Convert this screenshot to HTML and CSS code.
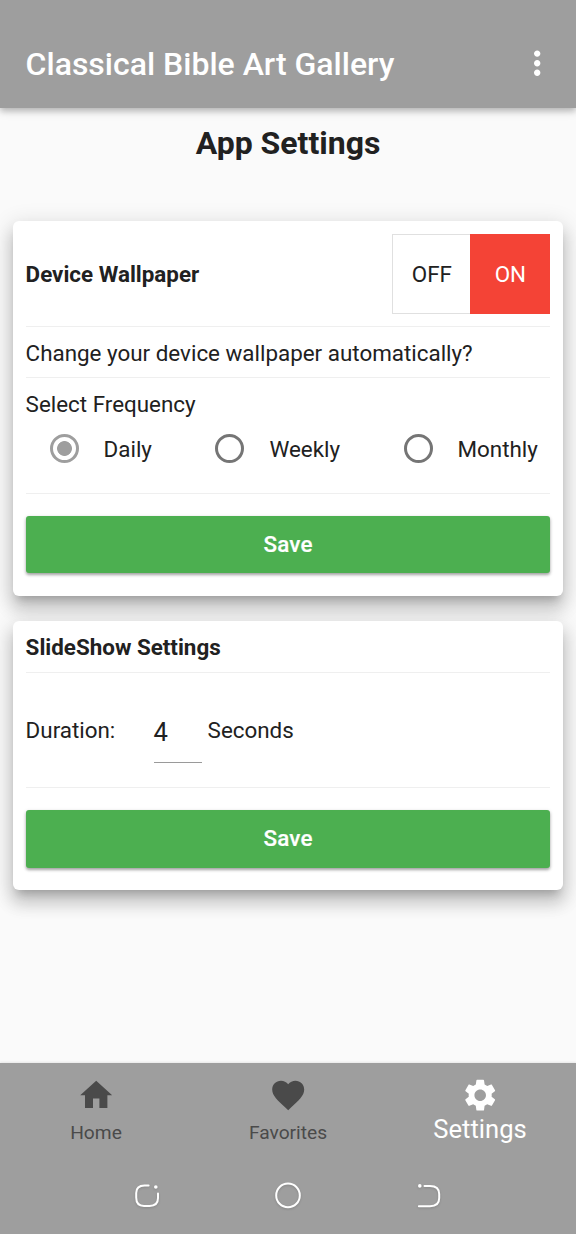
FILE: index.html
```html
<!DOCTYPE html>
<html lang="en">
<head>
<meta charset="utf-8">
<title>Classical Bible Art Gallery</title>
<link rel="stylesheet" href="styles.css">
</head>
<body>
<header class="app-bar">
  <h1 class="app-title">Classical Bible Art Gallery</h1>
  <svg class="more" viewBox="0 0 24 24"><path d="M12 8c1.1 0 2-.9 2-2s-.9-2-2-2-2 .9-2 2 .9 2 2 2zm0 2c-1.1 0-2 .9-2 2s.9 2 2 2 2-.9 2-2-.9-2-2-2zm0 6c-1.1 0-2 .9-2 2s.9 2 2 2 2-.9 2-2-.9-2-2-2z"/></svg>
</header>
<main class="content">
  <h2 class="page-title">App Settings</h2>
  <section class="card wallpaper">
    <div class="row toggle-row">
      <h3 class="card-title">Device Wallpaper</h3>
      <div class="toggle"><span class="option off">OFF</span><span class="option on">ON</span></div>
    </div>
    <p class="row question">Change your device wallpaper automatically?</p>
    <div class="row frequency">
      <p class="frequency-label">Select Frequency</p>
      <div class="radios">
        <span class="choice"><i class="radio checked"></i>Daily</span>
        <span class="choice"><i class="radio"></i>Weekly</span>
        <span class="choice"><i class="radio"></i>Monthly</span>
      </div>
    </div>
    <button class="save">Save</button>
  </section>
  <section class="card slideshow">
    <div class="row slideshow-head"><h3 class="card-title">SlideShow Settings</h3></div>
    <div class="row duration">
      <span class="duration-label">Duration:</span>
      <span class="field">4</span>
      <span class="unit">Seconds</span>
    </div>
    <button class="save">Save</button>
  </section>
</main>
<footer class="bottom">
  <nav class="tabs">
    <a class="tab"><svg class="icon" viewBox="0 0 24 24"><path d="M10 20v-6h4v6h5v-8h3L12 3 2 12h3v8z"/></svg><span class="tab-label">Home</span></a>
    <a class="tab"><svg class="icon" viewBox="0 0 24 24"><path d="M12 21.35l-1.45-1.32C5.4 15.36 2 12.28 2 8.5 2 5.42 4.42 3 7.5 3c1.74 0 3.41.81 4.5 2.09C13.09 3.81 14.76 3 16.5 3 19.58 3 22 5.42 22 8.5c0 3.78-3.4 6.86-8.55 11.54L12 21.35z"/></svg><span class="tab-label">Favorites</span></a>
    <a class="tab active"><svg class="icon" viewBox="0 0 24 24"><path d="M19.14 12.94c.04-.3.06-.61.06-.94 0-.32-.02-.64-.07-.94l2.03-1.58c.18-.14.23-.41.12-.61l-1.92-3.32c-.12-.22-.37-.29-.59-.22l-2.39.96c-.5-.38-1.03-.7-1.62-.94l-.36-2.54c-.04-.24-.24-.41-.48-.41h-3.84c-.24 0-.43.17-.47.41l-.36 2.54c-.59.24-1.13.57-1.62.94l-2.39-.96c-.22-.08-.47 0-.59.22L2.74 8.87c-.12.21-.08.47.12.61l2.03 1.58c-.05.3-.09.63-.09.94s.02.64.07.94l-2.03 1.58c-.18.14-.23.41-.12.61l1.92 3.32c.12.22.37.29.59.22l2.39-.96c.5.38 1.03.7 1.62.94l.36 2.54c.05.24.24.41.48.41h3.84c.24 0 .44-.17.47-.41l.36-2.54c.59-.24 1.13-.56 1.62-.94l2.39.96c.22.08.47 0 .59-.22l1.92-3.32c.12-.22.07-.47-.12-.61l-2.01-1.58zM12 15.6c-1.98 0-3.6-1.62-3.6-3.6s1.62-3.6 3.6-3.6 3.6 1.62 3.6 3.6-1.62 3.6-3.6 3.6z"/></svg><span class="tab-label">Settings</span></a>
  </nav>
  <div class="system-nav">
    <svg class="sys" viewBox="0 0 28 28"><path d="M15.6 4.4H11.5Q3.2 4.4 3.2 12V16.5Q3.2 24.9 11 24.9H16.5Q25 24.9 25 17V12.5"/><circle class="dot" cx="22.8" cy="6" r="1.8"/></svg>
    <svg class="sys" viewBox="0 0 28 28"><circle cx="14" cy="14.4" r="11.8"/></svg>
    <svg class="sys" viewBox="0 0 28 28"><path d="M9.5 4.9H15Q24.2 4.9 24.2 13V17Q24.2 25.2 15 25.2H3.9"/><circle class="dot" cx="4.8" cy="4.9" r="1.8"/></svg>
  </div>
</footer>
</body>
</html>
```
FILE: styles.css
```css
* { box-sizing: border-box; }
body {
  margin: 0;
  height: 1234px;
  display: flex;
  flex-direction: column;
  background: #fafafa;
  color: #212121;
  font-family: Roboto, "Liberation Sans", sans-serif;
  font-size: 22.4px;
  line-height: 26px;
}
h1, h2, h3, p { margin: 0; }

.app-bar {
  height: 107.5px;
  flex: none;
  display: flex;
  align-items: flex-start;
  justify-content: space-between;
  padding: 44px 19.5px 0 25.6px;
  background: #9e9e9e;
  color: #fff;
  box-shadow: 0 3px 6px rgba(0,0,0,.2), 0 3px 10px rgba(0,0,0,.12);
}
.app-title { font-size: 32px; font-weight: 500; line-height: 40px; }
.more { width: 38.4px; height: 38.4px; fill: #fff; }

.content { flex: 1; padding: 0 12.8px; }
.page-title {
  height: 113.5px;
  padding-top: 15px;
  font-size: 32px;
  font-weight: 700;
  line-height: 40px;
  text-align: center;
}

.card {
  margin-bottom: 25px;
  padding: 13px 12.8px 0;
  border-radius: 6px;
  background: #fff;
  box-shadow: 0 8px 8px -5px rgba(0,0,0,.2), 0 13px 16px 2px rgba(0,0,0,.14), 0 5px 22px 3px rgba(0,0,0,.12);
}
.wallpaper { height: 375px; }
.slideshow { height: 269px; margin-bottom: 0; padding-top: 0; }
.row { border-bottom: 1.6px solid #efefef; }
.card-title { font-size: 22.4px; font-weight: 700; }

.toggle-row { height: 93.4px; display: flex; justify-content: space-between; }
.toggle-row .card-title { padding-top: 27px; }
.toggle { display: flex; width: 158px; height: 80px; }
.option { flex: 1; display: flex; align-items: center; justify-content: center; }
.off { border: 1.6px solid #e0e0e0; border-right: 0; }
.on { flex: 0 0 80px; background: #f44336; color: #fff; }

.question { height: 51px; padding-top: 12.6px; }
.frequency { height: 115.2px; padding-top: 12.6px; }
.radios { display: flex; justify-content: space-between; padding: 15.6px 12.5px 0 24px; }
.choice { display: flex; align-items: center; gap: 25px; height: 32px; }
.radio {
  width: 29px;
  height: 29px;
  border: 3px solid #757575;
  border-radius: 50%;
}
.checked {
  border-color: #9e9e9e;
  background: radial-gradient(circle, #9e9e9e 7px, transparent 7.8px);
}

.save {
  display: block;
  width: 100%;
  height: 57.6px;
  margin-top: 22.2px;
  padding: 0 0 1px;
  border: 0;
  border-radius: 3px;
  background: #4caf50;
  color: #fff;
  font: 500 22.4px Roboto, "Liberation Sans", sans-serif;
  letter-spacing: 0.2px;
  -webkit-text-stroke: 0.2px #fff;
  box-shadow: 0 2px 3px rgba(0,0,0,.3), 0 1px 4px rgba(0,0,0,.12);
}

.slideshow-head { height: 52px; padding-top: 13px; }
.duration { height: 115px; display: flex; align-items: flex-start; padding-top: 44px; }
.duration-label { width: 128px; }
.field {
  width: 48px;
  height: 45.6px;
  padding-top: 2px;
  border-bottom: 1.6px solid #9a9a9a;
  font-size: 25.6px;
}
.unit { margin-left: 6px; }

.bottom { height: 171px; flex: none; background: #9e9e9e; box-shadow: 0 -1px 2px rgba(0,0,0,.08); }
.tabs { display: flex; height: 94px; }
.tab { flex: 1; display: flex; flex-direction: column; align-items: center; padding-top: 12.6px; color: #4a4a4a; }
.icon { width: 38.4px; height: 38.4px; fill: currentColor; }
.tab-label { margin-top: 6px; font-size: 19.2px; }
.active { color: #fff; }
.active .tab-label { margin-top: 2px; font-size: 25.6px; }
.system-nav { display: flex; justify-content: center; gap: 113px; padding-top: 24px; }
.sys {
  width: 28px;
  height: 28px;
  fill: none;
  stroke: #fff;
  stroke-width: 2;
  stroke-linecap: round;
  filter: drop-shadow(0 1px 1px rgba(0,0,0,.15));
}
.dot { fill: #fff; stroke: none; }
```
